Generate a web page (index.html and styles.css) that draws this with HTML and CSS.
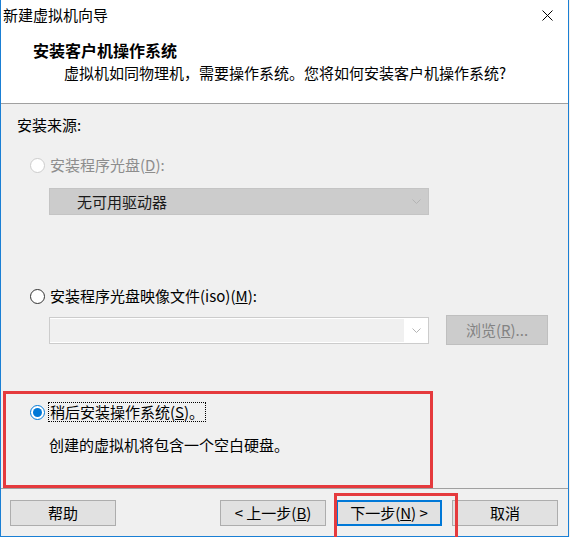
FILE: index.html
```html
<!DOCTYPE html>
<html lang="zh-CN">
<head>
    <meta charset="UTF-8">
    <title>新建虚拟机向导</title>
    <link rel="stylesheet" href="styles.css">
</head>
<body>

<div class="wizard">
    <div class="titlebar">
        <span class="title">新建虚拟机向导</span>
        <span class="close">
            <svg width="11" height="11" viewBox="0 0 11 11"><path d="M0.5 0.5 L10.5 10.5 M10.5 0.5 L0.5 10.5" stroke="#000" stroke-width="1" fill="none"/></svg>
        </span>
    </div>

    <div class="header">
        <h1>安装客户机操作系统</h1>
        <p>虚拟机如同物理机，需要操作系统。您将如何安装客户机操作系统?</p>
    </div>

    <div class="content">
        <div class="source-label">安装来源:</div>

        <label class="option disabled">
            <span class="radio"></span>
            <span>安装程序光盘(<u>D</u>):</span>
        </label>
        <div class="combo combo-disabled">
            <span class="combo-text">无可用驱动器</span>
            <svg class="chevron" width="9" height="5" viewBox="0 0 9 5"><path d="M0.5 0.5 L4.5 4.5 L8.5 0.5" stroke="#b4b4b4" fill="none"/></svg>
        </div>

        <label class="option option-iso">
            <span class="radio"></span>
            <span>安装程序光盘映像文件(iso)(<u>M</u>):</span>
        </label>
        <div class="iso-row">
            <div class="combo combo-edit">
                <span class="combo-field"></span>
                <span class="combo-drop">
                    <svg class="chevron" width="9" height="5" viewBox="0 0 9 5"><path d="M0.5 0.5 L4.5 4.5 L8.5 0.5" stroke="#b4b4b4" fill="none"/></svg>
                </span>
            </div>
            <button class="btn btn-browse" disabled>浏览(<u>R</u>)...</button>
        </div>

        <div class="later-box">
            <label class="option checked">
                <span class="radio"></span>
                <span class="focus">稍后安装操作系统(<u>S</u>)。</span>
            </label>
            <p class="note">创建的虚拟机将包含一个空白硬盘。</p>
        </div>
    </div>

    <div class="footer">
        <button class="btn">帮助</button>
        <button class="btn btn-back">&lt; 上一步(<u>B</u>)</button>
        <button class="btn btn-next">下一步(<u>N</u>) &gt;<span class="mark"></span></button>
        <button class="btn">取消</button>
    </div>
</div>

</body>
</html>
```

FILE: styles.css
```css
html {
    background: #f8f1ea;
}

body {
    margin: 0;
    font-family: "Noto Sans CJK SC", "Microsoft YaHei", sans-serif;
    font-size: 15px;
    color: #000;
    overflow: hidden;
}

.wizard {
    width: 569px;
    height: 537px;
    box-sizing: border-box;
    border: 1px solid #1a7fd4;
    border-top: none;
    background: #f0f0f0;
    display: flex;
    flex-direction: column;
}

/* title bar */
.titlebar {
    height: 30px;
    flex: none;
    background: #fff;
    display: flex;
    align-items: center;
    justify-content: space-between;
    padding: 0 15px 0 2px;
}

.title {
    line-height: 20px;
}

.close {
    display: flex;
}

/* header */
.header {
    height: 74px;
    flex: none;
    box-sizing: border-box;
    background: #fff;
    border-bottom: 1px solid #a0a0a0;
    padding: 10px 0 0 32px;
}

.header h1 {
    margin: 0;
    font-size: 16px;
    font-weight: 700;
    line-height: 20px;
}

.header p {
    margin: 3px 0 0 31px;
    line-height: 20px;
}

/* content */
.content {
    flex: 1;
    padding: 11px 0 0 16px;
}

.source-label {
    line-height: 20px;
}

.option {
    display: flex;
    align-items: center;
    height: 20px;
    margin-top: 20px;
    padding-left: 13px;
    line-height: 20px;
}

.option.disabled {
    color: #8d8d8d;
}

.option-iso {
    margin-top: 71px;
}

.radio {
    width: 15px;
    height: 15px;
    box-sizing: border-box;
    border: 1px solid #333;
    border-radius: 50%;
    background: #fff;
    margin-right: 5px;
    display: flex;
    align-items: center;
    justify-content: center;
    flex: none;
}

.disabled .radio {
    border-color: #cccccc;
}

.checked .radio {
    border-color: #0078d7;
}

.checked .radio::after {
    content: "";
    width: 9px;
    height: 9px;
    border-radius: 50%;
    background: #0078d7;
}

.focus {
    border: 1px dotted #000;
    margin-left: -2px;
    padding: 0 1px;
    line-height: 18px;
}

.combo {
    width: 380px;
    height: 27px;
    box-sizing: border-box;
    margin-left: 32px;
    display: flex;
    align-items: center;
}

.combo-disabled {
    margin-top: 13px;
    background: #cccccc;
    border: 1px solid #c4c4c4;
    padding: 0 7px 0 27px;
    justify-content: space-between;
}

.combo-text {
    color: #1a1a1a;
    line-height: 20px;
}

.iso-row {
    display: flex;
    align-items: center;
    margin-top: 9px;
    height: 30px;
}

.combo-edit {
    border: 1px solid #cccccc;
    background: #fff;
    padding: 1px 0;
    align-items: stretch;
}

.combo-field {
    flex: 1;
    background: #f0f0f0;
}

.combo-drop {
    width: 24px;
    display: flex;
    align-items: center;
    justify-content: center;
}

.later-box {
    margin: 46px 0 0 -14px;
    width: 430px;
    height: 97px;
    box-sizing: border-box;
    border: 3px solid #e53a3d;
    padding: 8px 0 0 24px;
}

.later-box .option {
    margin-top: 0;
    padding-left: 0;
}

.note {
    margin: 13px 0 0 19px;
    line-height: 20px;
}

/* buttons */
.btn {
    width: 106px;
    height: 26px;
    box-sizing: border-box;
    background: #e1e1e1;
    border: 1px solid #adadad;
    font-family: inherit;
    font-size: 15px;
    color: #000;
    padding: 0;
    line-height: 20px;
}

.btn-browse {
    width: 102px;
    height: 30px;
    margin-left: 17px;
    background: #cccccc;
    border-color: #bfbfbf;
    color: #838383;
}

.footer {
    height: 48px;
    flex: none;
    box-sizing: border-box;
    border-top: 1px solid #a0a0a0;
    padding: 11px 10px 0 9px;
    display: flex;
    align-items: flex-start;
    gap: 10px;
}

.btn-back {
    margin-left: auto;
}

.btn-next {
    border: 2px solid #0078d7;
    position: relative;
}

.btn-next .mark {
    position: absolute;
    top: -9px;
    left: -4px;
    right: -18px;
    bottom: -22px;
    border: 3px solid #e53a3d;
}
```
